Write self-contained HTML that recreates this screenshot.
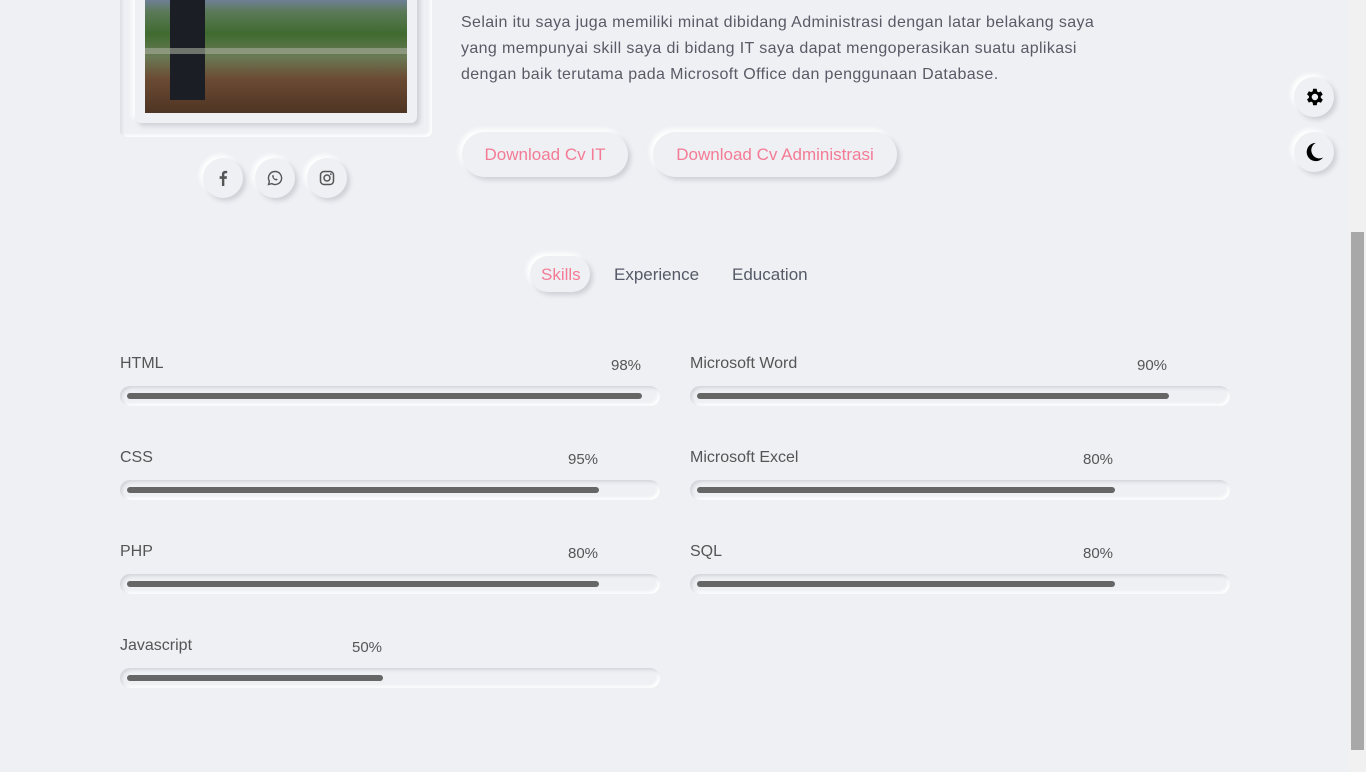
<!DOCTYPE html>
<html><head><meta charset="utf-8"><style>
*{margin:0;padding:0;box-sizing:border-box}
body{width:1366px;height:772px;overflow:hidden;background:#eef0f4;font-family:"Liberation Sans",sans-serif;color:#555;position:relative}
.abs{position:absolute}
.frame{left:120px;top:-20px;width:312px;height:157px;border-radius:6px;box-shadow:inset 2px 2px 3px #dcdde2,inset -2px -2px 3px #fff}
.inner{left:135px;top:-20px;width:282px;height:143px;border-radius:6px;background:#eef0f4;box-shadow:3px 3px 5px #cfd0d5,-3px -3px 5px #fff}
.photo{left:145px;top:0;width:262px;height:113px;background:linear-gradient(180deg,#6e7f96 0%,#5c7a5a 10%,#3f6b2f 30%,#6a7a55 50%,#6b4a33 70%,#4e3524 100%);overflow:hidden}
.social{width:40px;height:40px;border-radius:50%;background:#eef0f4;box-shadow:3px 3px 5px #cfd0d5,-3px -3px 5px #fff;display:flex;align-items:center;justify-content:center;top:158px}
p.txt{left:461px;top:10px;white-space:nowrap;font-size:16px;line-height:26px;color:#5a5a66;letter-spacing:.38px}
.btn{top:132px;height:45px;border-radius:23px;background:#eef0f4;box-shadow:3px 3px 5px #cfd0d5,-3px -3px 5px #fff;color:#f47b95;font-size:17px;display:flex;align-items:center;justify-content:center}
.tab{top:265px;font-size:17px;color:#555a66}
.lbl{font-size:16px;color:#555}
.pct{font-size:15px;color:#555}
.bar{height:20px;border-radius:10px;box-shadow:inset 2px 2px 3px #d3d4d9,inset -2px -2px 3px #fff}
.fill{position:absolute;top:7px;left:7px;height:6px;border-radius:3px;background:#666}
.rb{width:40px;height:40px;border-radius:50%;background:#eef0f4;box-shadow:3px 3px 5px #cfd0d5,-3px -3px 5px #fff;left:1294px;display:flex;align-items:center;justify-content:center}
</style></head><body>
<div class="abs frame"></div>
<div class="abs inner"></div>
<div class="abs photo">
<div class="abs" style="left:25px;top:0;width:35px;height:100px;background:#1b1e24"></div>
<div class="abs" style="left:0;top:48px;width:262px;height:6px;background:#a9ad9f;opacity:.6"></div>
</div>
<div class="abs social" style="left:203px"><svg width="14" height="16" viewBox="0 0 10 18"><path d="M6.5 18V10h2.6l.4-3H6.5V5.2c0-.9.3-1.5 1.6-1.5H9.7V1.1C9.4 1 8.5 1 7.5 1 5.3 1 3.8 2.3 3.8 4.8V7H1.2v3h2.6v8z" fill="#555"/></svg></div>
<div class="abs social" style="left:255px"><svg width="16" height="16" viewBox="0 0 16 16"><path d="M8 1.5a6.5 6.5 0 0 0-5.6 9.8L1.5 14.5l3.3-.9A6.5 6.5 0 1 0 8 1.5z" fill="none" stroke="#555" stroke-width="1.4"/><path d="M5.6 5c.3-.3.7-.2.8.1l.5 1.1c.1.3-.3.6-.4.8.4.9 1.1 1.6 2 2 .2-.1.5-.5.8-.4l1.1.5c.3.1.3.5.1.8-.5.6-1.2.7-2 .4C7 9.7 6 8.7 5.4 7.2c-.3-.8-.2-1.6.2-2.2z" fill="#555"/></svg></div>
<div class="abs social" style="left:307px"><svg width="16" height="16" viewBox="0 0 16 16"><rect x="1.5" y="1.5" width="13" height="13" rx="3.5" fill="none" stroke="#555" stroke-width="1.5"/><circle cx="8" cy="8" r="3" fill="none" stroke="#555" stroke-width="1.5"/><circle cx="11.8" cy="4.2" r=".9" fill="#555"/></svg></div>
<p class="abs txt">Selain itu saya juga memiliki minat dibidang Administrasi dengan latar belakang saya<br>yang mempunyai skill saya di bidang IT saya dapat mengoperasikan suatu aplikasi<br>dengan baik terutama pada Microsoft Office dan penggunaan Database.</p>
<div class="abs btn" style="left:462px;width:166px">Download Cv IT</div>
<div class="abs btn" style="left:653px;width:244px">Download Cv Administrasi</div>
<div class="abs" style="left:530px;top:256px;width:60px;height:36px;border-radius:18px;box-shadow:3px 3px 5px #cfd0d5,-3px -3px 5px #fff"></div>
<div class="abs tab" style="left:541px;color:#f47b95">Skills</div>
<div class="abs tab" style="left:614px">Experience</div>
<div class="abs tab" style="left:732px">Education</div>

<div class="abs lbl" style="left:120px;top:355px">HTML</div><div class="abs pct" style="left:611px;top:357px">98%</div>
<div class="abs bar" style="left:120px;top:386px;width:540px"><div class="fill" style="width:515px"></div></div>
<div class="abs lbl" style="left:120px;top:449px">CSS</div><div class="abs pct" style="left:568px;top:451px">95%</div>
<div class="abs bar" style="left:120px;top:480px;width:540px"><div class="fill" style="width:472px"></div></div>
<div class="abs lbl" style="left:120px;top:543px">PHP</div><div class="abs pct" style="left:568px;top:545px">80%</div>
<div class="abs bar" style="left:120px;top:574px;width:540px"><div class="fill" style="width:472px"></div></div>
<div class="abs lbl" style="left:120px;top:637px">Javascript</div><div class="abs pct" style="left:352px;top:639px">50%</div>
<div class="abs bar" style="left:120px;top:668px;width:540px"><div class="fill" style="width:256px"></div></div>

<div class="abs lbl" style="left:690px;top:355px">Microsoft Word</div><div class="abs pct" style="left:1137px;top:357px">90%</div>
<div class="abs bar" style="left:690px;top:386px;width:540px"><div class="fill" style="width:472px"></div></div>
<div class="abs lbl" style="left:690px;top:449px">Microsoft Excel</div><div class="abs pct" style="left:1083px;top:451px">80%</div>
<div class="abs bar" style="left:690px;top:480px;width:540px"><div class="fill" style="width:418px"></div></div>
<div class="abs lbl" style="left:690px;top:543px">SQL</div><div class="abs pct" style="left:1083px;top:545px">80%</div>
<div class="abs bar" style="left:690px;top:574px;width:540px"><div class="fill" style="width:418px"></div></div>

<div class="abs rb" style="top:77px"><svg width="22" height="22" viewBox="0 0 24 24"><path fill="#000" d="M19.4 13a7.5 7.5 0 0 0 0-2l2.1-1.6-2-3.5-2.5 1a7.6 7.6 0 0 0-1.7-1L15 3h-4l-.4 2.7a7.6 7.6 0 0 0-1.7 1l-2.5-1-2 3.5L6.5 11a7.5 7.5 0 0 0 0 2l-2.1 1.6 2 3.5 2.5-1c.5.4 1.1.8 1.7 1L11 21h4l.4-2.7c.6-.3 1.2-.6 1.7-1l2.5 1 2-3.5zM13 15.5a3.5 3.5 0 1 1 0-7 3.5 3.5 0 0 1 0 7z"/></svg></div>
<div class="abs rb" style="top:132px"><svg width="22" height="22" viewBox="0 0 24 24"><path fill="#000" d="M14 2a10 10 0 1 0 8 16A8.5 8.5 0 0 1 14 2z"/></svg></div>

<div class="abs" style="left:1349px;top:0;width:17px;height:772px;background:#f1f1f1"></div>
<div class="abs" style="left:1351px;top:232px;width:13px;height:518px;background:#a8a8a8"></div>
</body></html>
